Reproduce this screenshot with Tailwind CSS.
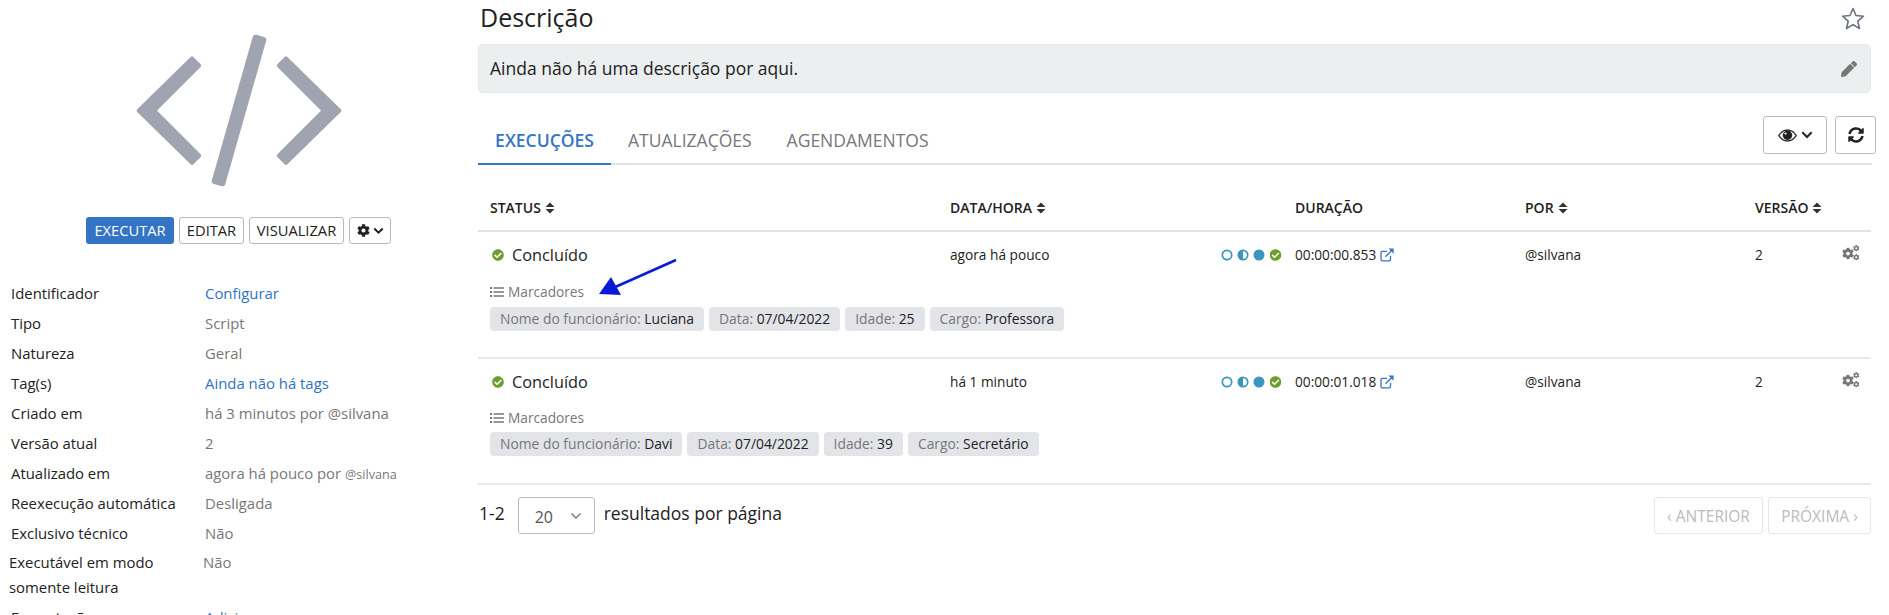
<!DOCTYPE html>
<html lang="pt-BR">
<head>
    <meta charset="UTF-8">
    <title>Script</title>
    <script src="https://cdn.jsdelivr.net/npm/@tailwindcss/browser@4"></script>
</head>
<body class="bg-white text-[#222] font-['Open_Sans',sans-serif] h-[615px] overflow-hidden relative">
    <svg class="hidden">
        <symbol id="cog" viewBox="0 0 512 512"><path fill="currentColor" d="M487.4 315.7l-42.6-24.6c4.3-23.2 4.3-47 0-70.2l42.6-24.6c4.9-2.8 7.1-8.6 5.5-14-11.1-35.6-30-67.8-54.7-94.6-3.8-4.1-10-5.1-14.8-2.3L380.8 110c-17.9-15.4-38.5-27.3-60.8-35.1V25.8c0-5.6-3.9-10.5-9.4-11.7-36.7-8.2-74.3-7.8-109.2 0-5.5 1.2-9.4 6.1-9.4 11.7V75c-22.2 7.9-42.8 19.8-60.8 35.1L88.7 85.5c-4.9-2.8-11-1.9-14.8 2.3-24.7 26.7-43.6 58.9-54.7 94.6-1.7 5.4.6 11.2 5.5 14L67.3 221c-4.3 23.2-4.3 47 0 70.2l-42.6 24.6c-4.9 2.8-7.1 8.6-5.5 14 11.1 35.6 30 67.8 54.7 94.6 3.8 4.1 10 5.1 14.8 2.3l42.6-24.6c17.9 15.4 38.5 27.3 60.8 35.1v49.2c0 5.6 3.9 10.5 9.4 11.7 36.7 8.2 74.3 7.8 109.2 0 5.5-1.2 9.4-6.1 9.4-11.7v-49.2c22.2-7.9 42.8-19.8 60.8-35.1l42.6 24.6c4.9 2.8 11 1.9 14.8-2.3 24.7-26.7 43.6-58.9 54.7-94.6 1.5-5.5-.7-11.3-5.6-14.1zM256 336c-44.1 0-80-35.9-80-80s35.9-80 80-80 80 35.9 80 80-35.9 80-80 80z"/></symbol>
        <symbol id="check" viewBox="0 0 512 512"><path fill="currentColor" d="M504 256c0 136.967-111.033 248-248 248S8 392.967 8 256 119.033 8 256 8s248 111.033 248 248zM227.314 387.314l184-184c6.248-6.248 6.248-16.379 0-22.627l-22.627-22.627c-6.248-6.249-16.379-6.249-22.628 0L216 308.118l-70.059-70.059c-6.248-6.248-16.379-6.248-22.628 0l-22.627 22.627c-6.248 6.248-6.248 16.379 0 22.627l104 104c6.249 6.249 16.379 6.249 22.628.001z"/></symbol>
        <symbol id="sort" viewBox="0 0 10 12"><path fill="currentColor" d="M5 .5 9.5 5H.5zM.5 7h9L5 11.5z"/></symbol>
        <symbol id="list" viewBox="0 0 14 12"><path fill="currentColor" d="M0 1h2v2H0zM0 5h2v2H0zM0 9h2v2H0zM3.5 1.2H14v1.6H3.5zM3.5 5.2H14v1.6H3.5zM3.5 9.2H14v1.6H3.5z"/></symbol>
        <symbol id="link" viewBox="0 0 14 14"><path fill="none" stroke="currentColor" stroke-width="1.3" d="M10.5 8v3.5a1.3 1.3 0 0 1-1.3 1.3H2.3A1.3 1.3 0 0 1 1 11.5V4.6a1.3 1.3 0 0 1 1.3-1.3H7M5.5 8.7 12.5 1.7"/><path fill="currentColor" d="M8.5.6H13.6V5.7z"/></symbol>
        <symbol id="cogs" viewBox="0 0 18 16"><use href="#cog" x="0" y="2.5" width="12" height="12"/><use href="#cog" x="11" y="0" width="6.5" height="6.5"/><use href="#cog" x="11" y="9" width="6.5" height="6.5"/></symbol>
        <symbol id="dots" viewBox="0 0 70 14"><circle cx="7" cy="7" r="4.7" fill="none" stroke="#3a96c0" stroke-width="1.7"/><circle cx="23" cy="7" r="4.7" fill="none" stroke="#3a96c0" stroke-width="1.7"/><path fill="#3a96c0" d="M23 2a5 5 0 0 0 0 10z"/><circle cx="39" cy="7" r="5.5" fill="#3a96c0"/><use href="#check" x="49.5" y="1" width="12" height="12" class="text-[#6c9f2e]"/></symbol>
    </svg>

    <div class="flex">
        <!-- coluna da esquerda -->
        <aside class="w-[478px] shrink-0">
            <svg class="w-[470px] h-[217px] block" viewBox="0 0 470 217" fill="#a0a4b0">
                <polygon stroke="#a0a4b0" stroke-width="4" stroke-linejoin="round" points="138.6,110.6 192,58.4 199.2,65.6 154.2,110.6 199.2,155.6 192,162.8"/>
                <polygon stroke="#a0a4b0" stroke-width="4" stroke-linejoin="round" points="339.4,110.6 286,58.4 278.8,65.6 323.8,110.6 278.8,155.6 286,162.8"/>
                <rect x="232" y="33" width="14" height="155" rx="3" transform="rotate(15.9 239 110.5)"/>
            </svg>
            <div class="flex ml-[86px] gap-[5px] text-[14.7px] h-[27px]">
                <button class="w-[88px] rounded-[3px] bg-[#3375c4] text-white">EXECUTAR</button>
                <button class="w-[65px] rounded-[3px] border border-[#bbb]">EDITAR</button>
                <button class="w-[95px] rounded-[3px] border border-[#bbb]">VISUALIZAR</button>
                <button class="w-[42px] rounded-[3px] border border-[#bbb] flex items-center justify-center gap-[3px]">
                    <svg class="w-[13px] h-[13px]"><use href="#cog"/></svg>
                    <svg class="w-[11px] h-[8px]" viewBox="0 0 11 8"><path d="M1.3 1.5 5.5 5.7 9.7 1.5" fill="none" stroke="currentColor" stroke-width="2"/></svg>
                </button>
            </div>
            <dl class="mt-[34px] ml-[11px] text-[14.9px] text-[#777]">
                <div class="flex h-[30px] items-center"><dt class="w-[194px] text-[#222]">Identificador</dt><dd class="text-[#2f73c4]">Configurar</dd></div>
                <div class="flex h-[30px] items-center"><dt class="w-[194px] text-[#222]">Tipo</dt><dd>Script</dd></div>
                <div class="flex h-[30px] items-center"><dt class="w-[194px] text-[#222]">Natureza</dt><dd>Geral</dd></div>
                <div class="flex h-[30px] items-center"><dt class="w-[194px] text-[#222]">Tag(s)</dt><dd class="text-[#2f73c4]">Ainda não há tags</dd></div>
                <div class="flex h-[30px] items-center"><dt class="w-[194px] text-[#222]">Criado em</dt><dd>há 3 minutos por @silvana</dd></div>
                <div class="flex h-[30px] items-center"><dt class="w-[194px] text-[#222]">Versão atual</dt><dd>2</dd></div>
                <div class="flex h-[30px] items-center"><dt class="w-[194px] text-[#222]">Atualizado em</dt><dd>agora há pouco por <span class="text-[12.6px]">@silvana</span></dd></div>
                <div class="flex h-[30px] items-center"><dt class="w-[194px] text-[#222]">Reexecução automática</dt><dd>Desligada</dd></div>
                <div class="flex h-[30px] items-center"><dt class="w-[194px] text-[#222]">Exclusivo técnico</dt><dd>Não</dd></div>
                <div class="flex -ml-[2px] leading-[25px] mt-[2px]"><dt class="w-[194px] text-[#222]">Executável em modo<br>somente leitura</dt><dd>Não</dd></div>
                <div class="flex mt-[5px] leading-[25px]"><dt class="w-[194px] text-[#222]">Formatação</dt><dd class="text-[#2f73c4]">Adicionar</dd></div>
            </dl>
        </aside>

        <!-- coluna principal -->
        <main class="w-[1393px] shrink-0">
            <div class="flex items-start justify-between h-[37px] pl-[2px] pr-[6px]">
                <h1 class="text-[25px] leading-[35px]">Descrição</h1>
                <svg class="mt-[7px] w-[24px] h-[23px]" viewBox="0 0 24 23"><path fill="none" stroke="#6b7280" stroke-width="1.6" stroke-linejoin="round" d="M12 1.5l3 7 7.5.7-5.7 5 1.7 7.3L12 17.6 5.5 21.5l1.7-7.3-5.7-5L9 8.5z"/></svg>
            </div>
            <div class="mt-[7px] h-[49px] flex items-center justify-between rounded-[5px] border border-[#e6e9e9] bg-[#ecefef] pl-[11px] pr-[13px] text-[17.5px]">
                <span>Ainda não há uma descrição por aqui.</span>
                <svg class="w-[16px] h-[16px] text-[#777]" viewBox="0 0 512 512"><path fill="currentColor" d="M497.9 142.1l-46.1 46.1c-4.7 4.7-12.3 4.7-17 0l-111-111c-4.7-4.7-4.7-12.3 0-17l46.1-46.1c18.7-18.7 49.1-18.7 67.9 0l60.1 60.1c18.8 18.7 18.8 49.1 0 67.9zM284.2 99.8L21.6 362.4.4 483.9c-2.9 16.4 11.4 30.6 27.8 27.8l121.5-21.3 262.6-262.6c4.7-4.7 4.7-12.3 0-17l-111-111c-4.8-4.7-12.4-4.7-17.1 0z"/></svg>
            </div>

            <div class="relative mt-[24px] h-[48px] w-[1394px] border-b-2 border-[#e2e3e7] flex text-[17.5px] text-[#777]">
                <span class="w-[133px] h-[48px] border-b-2 border-[#3375c4] text-center leading-[47px] font-semibold text-[#3375c4]">EXECUÇÕES</span>
                <span class="ml-[17px] leading-[47px]">ATUALIZAÇÕES</span>
                <span class="ml-[35px] leading-[47px]">AGENDAMENTOS</span>
                <div class="absolute -top-[1px] left-[1285px] flex gap-[8px] text-[#222]">
                    <button class="w-[64px] h-[38px] rounded-[3px] border border-[#bbb] flex items-center justify-center gap-[4px]">
                        <svg class="w-[19px] h-[13px]" viewBox="0 0 19 13">
                            <path fill="currentColor" d="M0 6.5C3 2 6 .5 9.5.5S16 2 19 6.5C16 11 13 12.5 9.5 12.5S3 11 0 6.5z"/>
                            <path fill="#fff" d="M1.5 6.5C4 3 6.5 1.7 9.5 1.7S15 3 17.5 6.5C15 10 12.5 11.3 9.5 11.3S4 10 1.5 6.5z"/>
                            <circle cx="9.5" cy="6.3" r="4.7" fill="currentColor"/>
                            <circle cx="7.5" cy="4.6" r="1.1" fill="#fff"/>
                        </svg>
                        <svg class="w-[12px] h-[8px]" viewBox="0 0 12 8"><path d="M1.3 1.3 6 6 10.7 1.3" fill="none" stroke="currentColor" stroke-width="2"/></svg>
                    </button>
                    <button class="w-[41px] h-[38px] rounded-[3px] border border-[#bbb] flex items-center justify-center">
                        <svg class="w-[16px] h-[16px]" viewBox="0 0 512 512"><path fill="currentColor" d="M370.72 133.28C339.458 104.008 298.888 87.962 255.848 88c-77.458.068-144.328 53.178-162.791 126.85-1.344 5.363-6.122 9.15-11.651 9.15H24.103c-7.498 0-13.194-6.807-11.807-14.176C33.933 94.924 134.813 8 256 8c66.448 0 126.791 26.136 171.315 68.685L463.03 40.97C478.149 25.851 504 36.559 504 57.941V192c0 13.255-10.745 24-24 24H345.941c-21.382 0-32.09-25.851-16.971-40.971l41.75-41.749zM32 296h134.059c21.382 0 32.09 25.851 16.971 40.971l-41.75 41.75c31.262 29.273 71.835 45.319 114.876 45.28 77.418-.07 144.315-53.144 162.787-126.849 1.344-5.363 6.122-9.15 11.651-9.15h57.304c7.498 0 13.194 6.807 11.807 14.176C478.067 417.076 377.187 504 256 504c-66.448 0-126.791-26.136-171.315-68.685L48.97 471.03C33.851 486.149 8 475.441 8 454.059V320c0-13.255 10.745-24 24-24z"/></svg>
                    </button>
                </div>
            </div>

            <!-- cabecalho da tabela -->
            <div class="mt-[30px] h-[37px] border-b-2 border-[#e2e2e2] pb-[10px] grid grid-cols-[460px_345px_230px_230px_1fr] pl-[12px] text-[14px] font-semibold items-center">
                <span class="flex items-center gap-[4px]">STATUS <svg class="w-[10px] h-[12px] text-[#333]"><use href="#sort"/></svg></span>
                <span class="flex items-center gap-[4px]">DATA/HORA <svg class="w-[10px] h-[12px] text-[#333]"><use href="#sort"/></svg></span>
                <span>DURAÇÃO</span>
                <span class="flex items-center gap-[4px]">POR <svg class="w-[10px] h-[12px] text-[#333]"><use href="#sort"/></svg></span>
                <span class="flex items-center gap-[4px]">VERSÃO <svg class="w-[10px] h-[12px] text-[#333]"><use href="#sort"/></svg></span>
            </div>

            <!-- linha 1 -->
            <div class="h-[127px] border-b-2 border-[#e8e8e8] pl-[12px] pt-[11px]">
                <div class="grid grid-cols-[460px_263px_82px_230px_230px_1fr] items-center h-[24px] text-[13.7px]">
                    <span class="flex items-center gap-[8px] pl-[2px] text-[16.3px]"><svg class="w-[12px] h-[12px] text-[#6c9f2e]"><use href="#check"/></svg>Concluído</span>
                    <span>agora há pouco</span>
                    <svg class="w-[70px] h-[14px] ml-[7px]"><use href="#dots"/></svg>
                    <span class="flex items-center gap-[4px]">00:00:00.853 <svg class="w-[14px] h-[14px] text-[#3375c4]"><use href="#link"/></svg></span>
                    <span>@silvana</span>
                    <span class="flex justify-between pr-[11px]">2 <svg class="w-[18px] h-[16px] text-[#777]"><use href="#cogs"/></svg></span>
                </div>
                <div class="mt-[16px] flex items-center gap-[4px] text-[13.7px] leading-[18px] text-[#777]"><svg class="w-[14px] h-[12px]"><use href="#list"/></svg>Marcadores</div>
                <div class="mt-[6px] flex gap-[5px] text-[13.85px] text-[#777] leading-[24px]">
                    <span class="rounded-[4px] bg-[#e3e4e8] px-[10px]">Nome do funcionário: <span class="text-[#222]">Luciana</span></span>
                    <span class="rounded-[4px] bg-[#e3e4e8] px-[10px]">Data: <span class="text-[#222]">07/04/2022</span></span>
                    <span class="rounded-[4px] bg-[#e3e4e8] px-[10px]">Idade: <span class="text-[#222]">25</span></span>
                    <span class="rounded-[4px] bg-[#e3e4e8] px-[10px]">Cargo: <span class="text-[#222]">Professora</span></span>
                </div>
            </div>

            <!-- linha 2 -->
            <div class="h-[126px] border-b-2 border-[#e8e8e8] pl-[12px] pt-[11px]">
                <div class="grid grid-cols-[460px_263px_82px_230px_230px_1fr] items-center h-[24px] text-[13.7px]">
                    <span class="flex items-center gap-[8px] pl-[2px] text-[16.3px]"><svg class="w-[12px] h-[12px] text-[#6c9f2e]"><use href="#check"/></svg>Concluído</span>
                    <span>há 1 minuto</span>
                    <svg class="w-[70px] h-[14px] ml-[7px]"><use href="#dots"/></svg>
                    <span class="flex items-center gap-[4px]">00:00:01.018 <svg class="w-[14px] h-[14px] text-[#3375c4]"><use href="#link"/></svg></span>
                    <span>@silvana</span>
                    <span class="flex justify-between pr-[11px]">2 <svg class="w-[18px] h-[16px] text-[#777]"><use href="#cogs"/></svg></span>
                </div>
                <div class="mt-[15px] flex items-center gap-[4px] text-[13.7px] leading-[18px] text-[#777]"><svg class="w-[14px] h-[12px]"><use href="#list"/></svg>Marcadores</div>
                <div class="mt-[5px] flex gap-[5px] text-[13.85px] text-[#777] leading-[24px]">
                    <span class="rounded-[4px] bg-[#e3e4e8] px-[10px]">Nome do funcionário: <span class="text-[#222]">Davi</span></span>
                    <span class="rounded-[4px] bg-[#e3e4e8] px-[10px]">Data: <span class="text-[#222]">07/04/2022</span></span>
                    <span class="rounded-[4px] bg-[#e3e4e8] px-[10px]">Idade: <span class="text-[#222]">39</span></span>
                    <span class="rounded-[4px] bg-[#e3e4e8] px-[10px]">Cargo: <span class="text-[#222]">Secretário</span></span>
                </div>
            </div>

            <!-- paginacao -->
            <div class="mt-[12px] flex items-start text-[17.5px]">
                <span class="ml-[1px] leading-[33px]">1-2</span>
                <div class="ml-[13px] w-[77px] h-[37px] rounded-[3px] border border-[#bbb] flex items-center justify-between pl-[16px] pr-[12px] text-[#555] text-[16px]">
                    <span class="pt-[3px]">20</span>
                    <svg class="w-[12px] h-[8px]" viewBox="0 0 12 8"><path d="M1.5 1.5 6 6 10.5 1.5" fill="none" stroke="#777" stroke-width="1.4"/></svg>
                </div>
                <span class="ml-[9px] leading-[33px]">resultados por página</span>
                <div class="ml-auto flex gap-[5px] text-[15.5px] text-[#bbb]">
                    <button class="w-[109px] h-[37px] pt-[2px] rounded-[3px] border border-[#e6e6e6]">‹ ANTERIOR</button>
                    <button class="w-[103px] h-[37px] pt-[2px] rounded-[3px] border border-[#e6e6e6]">PRÓXIMA ›</button>
                </div>
            </div>
        </main>
    </div>

    <!-- seta sobre a captura -->
    <svg class="absolute left-0 top-0 w-[700px] h-[320px] pointer-events-none" viewBox="0 0 700 320">
        <line x1="676" y1="260" x2="613" y2="288" stroke="#0a1bd6" stroke-width="2.5"/>
        <polygon fill="#0a1bd6" points="599,294 611,277 621,295"/>
    </svg>
</body>
</html>
